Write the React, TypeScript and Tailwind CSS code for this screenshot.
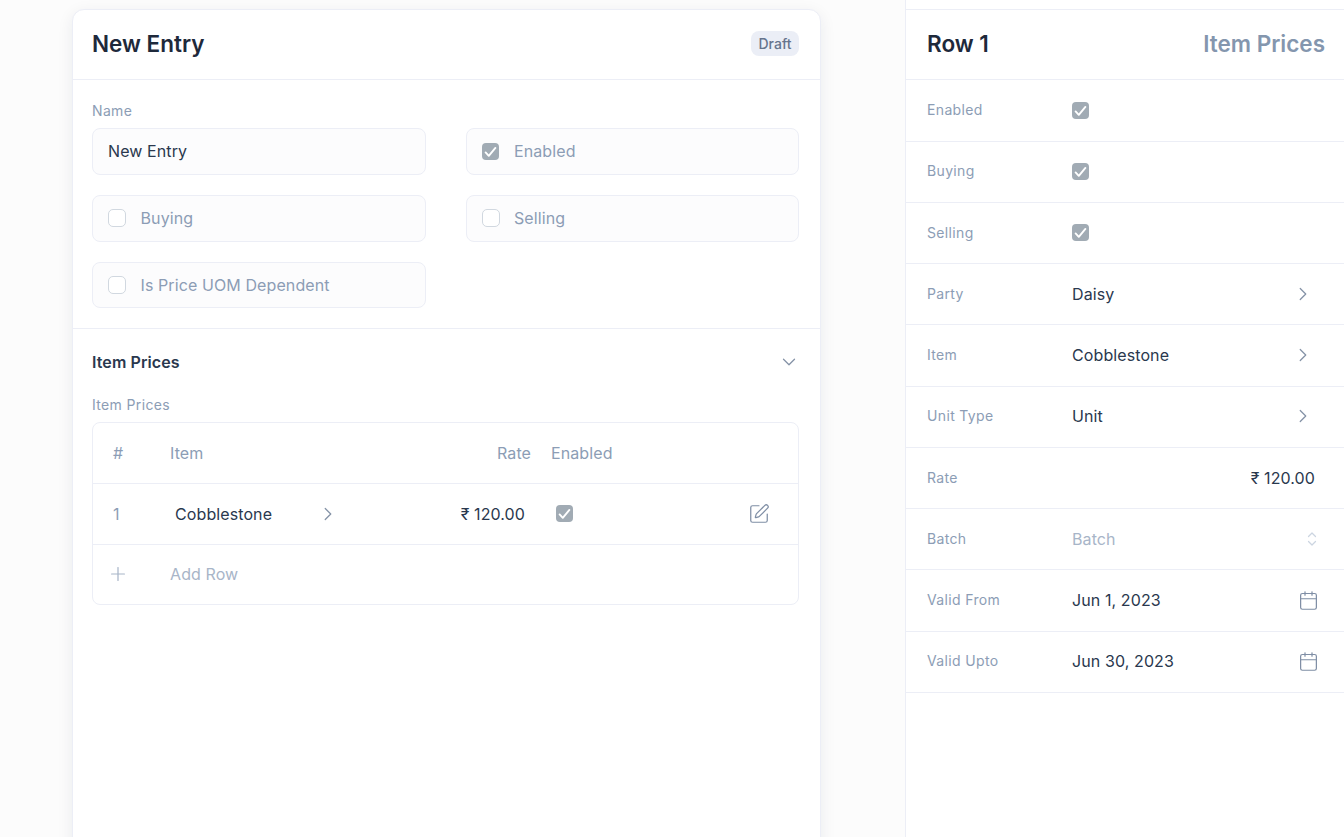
import { Calendar, ChevronDown, ChevronRight, Plus, SquarePen } from 'lucide-react'

const CheckBox = ({ checked = false }: { checked?: boolean }) =>
  checked ? (
    <span className="flex h-[17px] w-[17px] shrink-0 items-center justify-center rounded-[4px] bg-[#a1abb4]">
      <svg width="17" height="17" viewBox="0 0 17 17" fill="none" stroke="#fff" strokeWidth="1.9" strokeLinecap="round" strokeLinejoin="round">
        <path d="M3.6 9.4 6.8 12.8 13.4 4.9" />
      </svg>
    </span>
  ) : (
    <span className="h-[18px] w-[18px] shrink-0 rounded-[5px] border border-[#d1d8e0] bg-white" />
  )

const CheckField = ({ label, checked }: { label: string; checked?: boolean }) => (
  <div className="flex h-[46.67px] items-center gap-[14.5px] rounded-lg border border-[#eceef6] bg-[#fcfcfd] px-[15px] pb-[0.6px] tracking-[0.1px] text-[#8c9db5]">
    <CheckBox checked={checked} />
    <span className={checked ? 'ml-px' : ''}>{label}</span>
  </div>
)

const UpDownIcon = () => (
  <svg width="10" height="16" viewBox="0 0 10 16" fill="none" stroke="#ccd5e1" strokeWidth="1.25" strokeLinecap="round" strokeLinejoin="round">
    <path d="M1.5 5.5 5 2l3.5 3.5" />
    <path d="M1.5 10.5 5 14l3.5-3.5" />
  </svg>
)

interface SideRow {
  label: string
  value?: string
  kind: 'check' | 'link' | 'rate' | 'select' | 'date'
}

const sideRows: SideRow[] = [
  { label: 'Enabled', kind: 'check' },
  { label: 'Buying', kind: 'check' },
  { label: 'Selling', kind: 'check' },
  { label: 'Party', value: 'Daisy', kind: 'link' },
  { label: 'Item', value: 'Cobblestone', kind: 'link' },
  { label: 'Unit Type', value: 'Unit', kind: 'link' },
  { label: 'Rate', value: '₹ 120.00', kind: 'rate' },
  { label: 'Batch', value: 'Batch', kind: 'select' },
  { label: 'Valid From', value: 'Jun 1, 2023', kind: 'date' },
  { label: 'Valid Upto', value: 'Jun 30, 2023', kind: 'date' },
]

const SideValue = ({ row }: { row: SideRow }) => {
  if (row.kind === 'check') return <CheckBox checked />
  if (row.kind === 'rate') return <span className="block pr-[2px] text-right tracking-[0.1px] text-[#2a384e]">{row.value}</span>
  return (
    <div className="flex items-center justify-between tracking-[0.1px]">
      <span className={row.kind === 'select' ? 'text-[#a8b5c8]' : 'text-[#2a384e]'}>{row.value}</span>
      {row.kind === 'link' && <ChevronRight className="mr-[3px] h-[22px] w-[22px] text-[#8492a6]" strokeWidth={1.35} />}
      {row.kind === 'select' && <UpDownIcon />}
      {row.kind === 'date' && <Calendar className="-mr-[2px] h-[21px] w-[21px] text-[#7f8ea5]" strokeWidth={1.4} />}
    </div>
  )
}

export default function App() {
  return (
    <div className="flex h-[837px] overflow-hidden bg-[#fcfcfc] font-['Inter',sans-serif] text-base subpixel-antialiased">
      {/* Form */}
      <div className="w-[905px] shrink-0 pl-[72px] pt-[9px]">
        <div className="h-[900px] w-[749px] rounded-xl border border-[#eceef6] bg-white shadow-[0_4px_16px_rgba(30,40,70,0.08)]">
          <div className="flex h-[70px] items-center justify-between border-b border-[#eceef6] pl-[19px] pr-[21px]">
            <h1 className="pb-[2px] text-[22.5px] font-semibold text-[#1e293b]">New Entry</h1>
            <span className="mb-[3px] rounded-lg bg-[#ebeef6] px-[7.5px] text-sm font-medium leading-[25px] text-[#66748c]">Draft</span>
          </div>

          <div className="border-b border-[#eceef6] py-5 pl-[19px] pr-[21px]">
            <div className="grid grid-cols-2 gap-x-10 gap-y-5">
              <div>
                <label className="mb-[7.3px] block pt-px text-sm leading-[20px] tracking-[0.35px] text-[#8c9db5]">Name</label>
                <div className="flex h-[46.67px] items-center rounded-lg border border-[#eceef6] bg-[#fcfcfd] px-[15px] pb-[0.6px] tracking-[0.1px] text-[#2a384e]">New Entry</div>
              </div>
              <div className="self-end">
                <CheckField label="Enabled" checked />
              </div>
              <CheckField label="Buying" />
              <CheckField label="Selling" />
              <CheckField label="Is Price UOM Dependent" />
            </div>
          </div>

          <div className="pb-5 pl-[19px] pr-[21px] pt-[20.7px]">
            <div className="flex h-[24px] items-center justify-between">
              <h2 className="font-semibold tracking-[0.1px] text-[#2a384e]">Item Prices</h2>
              <ChevronDown className="-mr-px h-[22px] w-[22px] text-[#8492a6]" strokeWidth={1.35} />
            </div>
            <label className="mb-[7px] mt-[21px] block text-sm leading-[20px] tracking-[0.35px] text-[#8c9db5]">Item Prices</label>
            <div className="rounded-lg border border-[#eceef6] tracking-[0.1px]">
              <div className="grid h-[61px] grid-cols-[77px_240px_121px_1fr] items-center border-b border-[#eceef6] text-[#8c9db5]">
                <span className="pl-5">#</span>
                <span>Item</span>
                <span className="text-right">Rate</span>
                <span className="pl-5">Enabled</span>
              </div>
              <div className="grid h-[61px] grid-cols-[77px_240px_121px_1fr] items-center border-b border-[#eceef6]">
                <span className="pl-5 text-[#8c9db5]">1</span>
                <div className="flex items-center justify-between pl-[5px] pr-[71.5px] text-[#2a384e]">
                  <span>Cobblestone</span>
                  <ChevronRight className="h-[22px] w-[22px] text-[#8492a6]" strokeWidth={1.35} />
                </div>
                <span className="pr-[6px] text-right text-[#2a384e]">₹ 120.00</span>
                <div className="flex items-center justify-between pl-[25px] pr-[28px]">
                  <CheckBox checked />
                  <SquarePen className="h-[22px] w-[22px] text-[#7f8ea5]" strokeWidth={1.35} />
                </div>
              </div>
              <div className="grid h-[59px] grid-cols-[77px_1fr] items-center text-[#a8b5c8]">
                <Plus className="ml-[14px] h-[22px] w-[22px]" strokeWidth={1.35} />
                <span>Add Row</span>
              </div>
            </div>
          </div>
        </div>
      </div>

      {/* Row panel */}
      <div className="min-w-0 flex-1 border-l border-[#eceef6] bg-white pt-[9px]">
        <div className="flex h-[71.25px] items-center justify-between border-y border-[#eceef6] pb-[1px] pl-[21px] pr-[19px] text-[22.5px] font-semibold">
          <span className="text-[#1e293b]">Row 1</span>
          <span className="text-[#8496ae]">Item Prices</span>
        </div>
        {sideRows.map((row) => (
          <div key={row.label} className="grid h-[61.25px] grid-cols-[145px_1fr] items-center border-b border-[#eceef6] pb-[0.5px] pl-[21px] pr-[27px]">
            <span className="text-sm tracking-[0.35px] text-[#8c9db5]">{row.label}</span>
            <SideValue row={row} />
          </div>
        ))}
      </div>
    </div>
  )
}
